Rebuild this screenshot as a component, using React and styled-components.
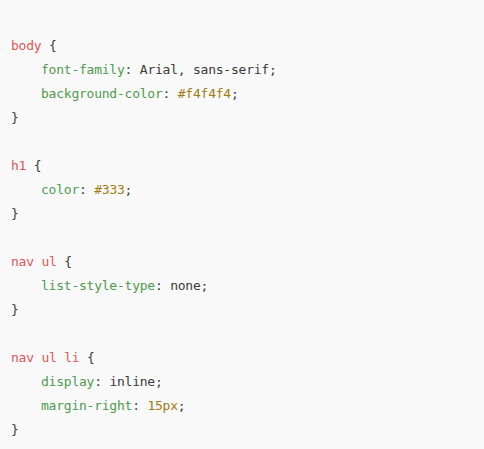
import styled, { createGlobalStyle } from "styled-components";

const GlobalStyle = createGlobalStyle`
  html, body {
    margin: 0;
    padding: 0;
    background: #f9f9f9;
  }
`;

const Page = styled.div`
  width: 484px;
  height: 449px;
  box-sizing: border-box;
  background: #f9f9f9;
  padding: 34px 0 0 11px;
`;

const Code = styled.pre`
  margin: 0;
  font-family: "DejaVu Sans Mono", "Liberation Mono", monospace;
  font-size: 13px;
  letter-spacing: -0.23px;
  line-height: 24px;
  color: #3a3a3a;
  white-space: pre;
`;

const Line = styled.div`
  height: 24px;
  padding-left: ${(p) => (p.$indent ? "30px" : "0")};
`;

const Sel = styled.span`
  color: #d95757;
`;

const Prop = styled.span`
  color: #4f9a4f;
`;

const Num = styled.span`
  color: #a07b12;
`;

const rules = [
  {
    sel: "body",
    decls: [
      ["font-family", "Arial, sans-serif", false],
      ["background-color", "#f4f4f4", true],
    ],
  },
  { sel: "h1", decls: [["color", "#333", true]] },
  { sel: "nav ul", decls: [["list-style-type", "none", false]] },
  {
    sel: "nav ul li",
    decls: [
      ["display", "inline", false],
      ["margin-right", "15px", true],
    ],
  },
];

export default function App() {
  return (
    <Page>
      <GlobalStyle />
      <Code>
        {rules.map((r, i) => (
          <div key={i}>
            {i > 0 && <Line />}
            <Line>
              <Sel>{r.sel}</Sel> {"{"}
            </Line>
            {r.decls.map(([p, v, num]) => (
              <Line $indent key={p}>
                <Prop>{p}</Prop>: {num ? <Num>{v}</Num> : v};
              </Line>
            ))}
            <Line>{"}"}</Line>
          </div>
        ))}
      </Code>
    </Page>
  );
}
